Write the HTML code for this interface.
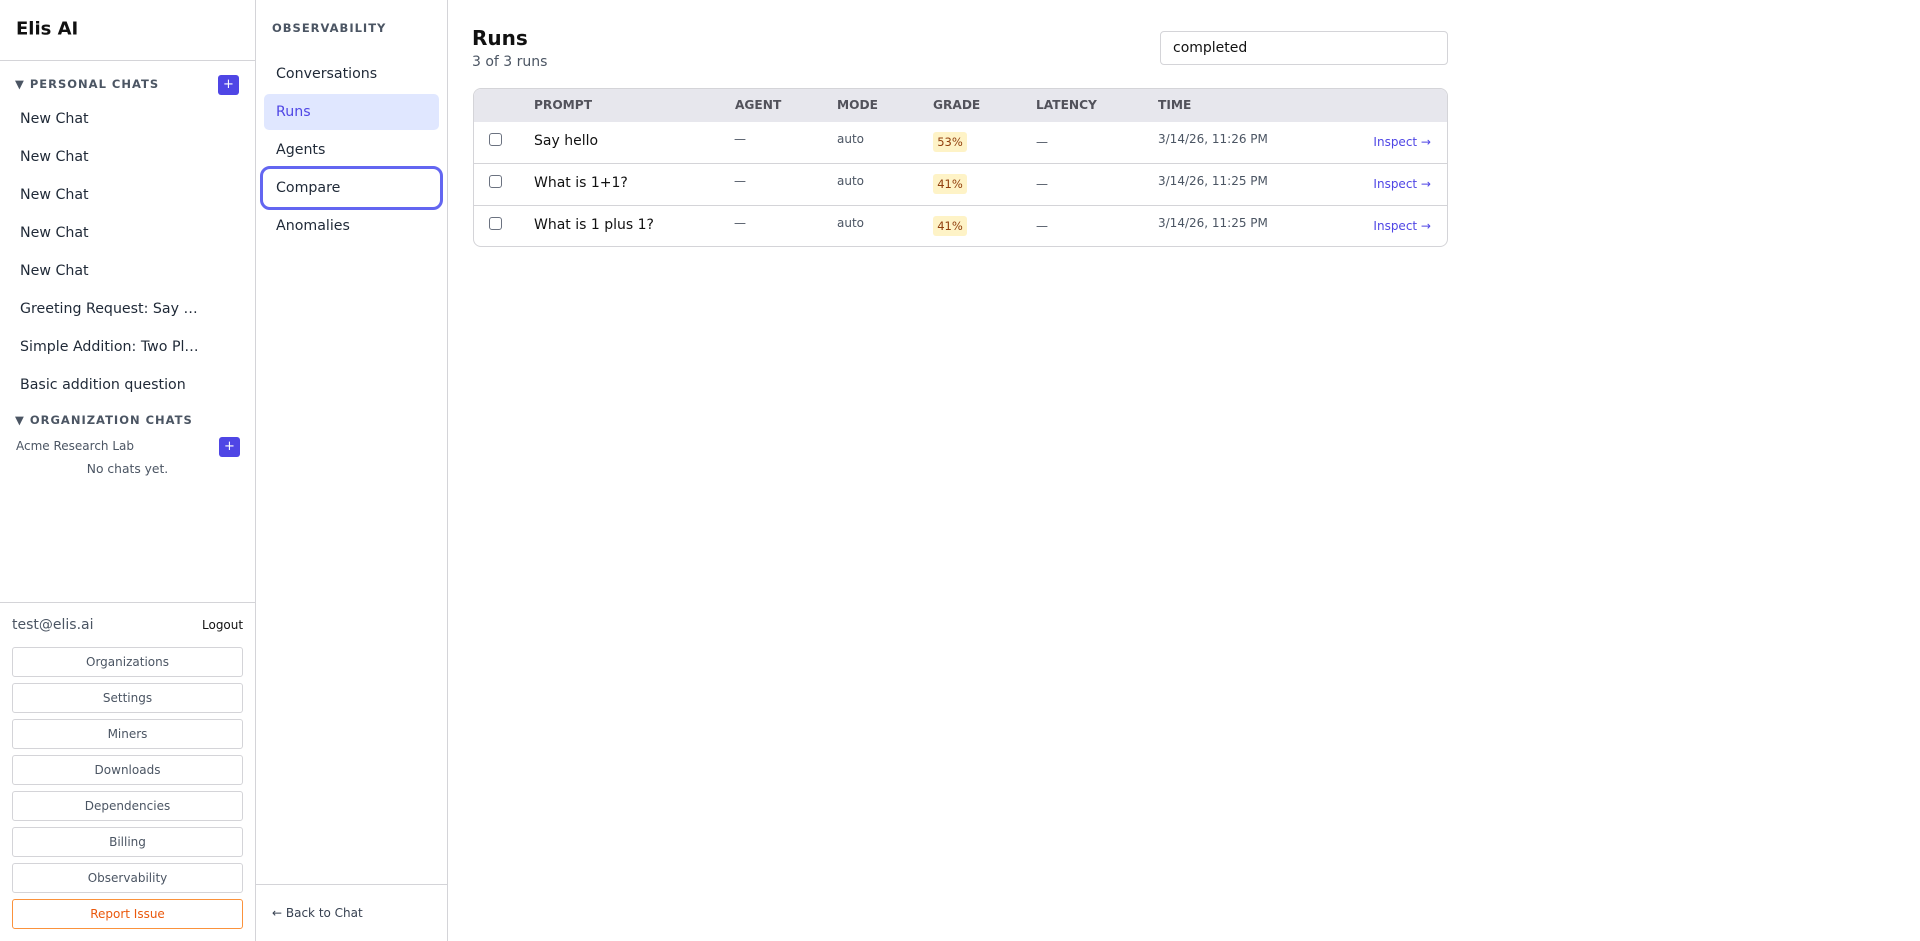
<!DOCTYPE html>
<html><head><meta charset="utf-8"><style>
*{box-sizing:border-box;margin:0;padding:0}
body{width:1920px;height:941px;position:relative;font-family:"DejaVu Sans","Liberation Sans",sans-serif;background:#fff;color:#111;overflow:hidden}
.a{position:absolute;white-space:nowrap}
.vc{transform:translateY(-50%)}
.sb{position:absolute;left:0;top:0;width:256px;height:941px;border-right:1.5px solid #d4d4d8}
.ob{position:absolute;left:256px;top:0;width:192px;height:941px;border-right:1.5px solid #d4d4d8}
.hdr{font-size:11.5px;font-weight:bold;letter-spacing:1px;color:#4b5563}
.plus{position:absolute;width:21px;height:20px;background:#4f46e5;border-radius:3px;color:#fff;font-size:13px;line-height:20px;text-align:center}
.item{font-size:14.2px;color:#1f2937}
.btn{position:absolute;left:12px;width:231px;height:30px;border:1px solid #d4d4d8;border-radius:3px;text-align:center;font-size:12px;line-height:28px;color:#4b5563}
.th{font-size:12.2px;font-weight:bold;color:#52525b}
.cb{position:absolute;width:13px;height:13px;border:1.3px solid #6b7280;border-radius:3px;background:#fff}
.sm{font-size:12px;color:#4b5563}
.badge{position:absolute;width:34px;height:20px;background:#fef3c7;border-radius:3px;color:#92400e;font-size:11.5px;line-height:20px;text-align:center}
.ins{font-size:12px;color:#4f46e5;right:489px}
</style></head><body>
<div class="sb">
 <div class="a vc" style="left:16px;top:29px;font-size:18px;font-weight:bold">Elis AI</div>
 <div class="a" style="left:0;top:60px;width:255px;border-top:1.5px solid #d4d4d8"></div>
 <div class="a vc hdr" style="left:15px;top:84px">▼ PERSONAL CHATS</div>
 <div class="plus" style="left:218px;top:75px">+</div>
 <div class="a vc item" style="left:20px;top:119px">New Chat</div>
 <div class="a vc item" style="left:20px;top:157px">New Chat</div>
 <div class="a vc item" style="left:20px;top:195px">New Chat</div>
 <div class="a vc item" style="left:20px;top:233px">New Chat</div>
 <div class="a vc item" style="left:20px;top:271px">New Chat</div>
 <div class="a vc item" style="left:20px;top:309px">Greeting Request: Say …</div>
 <div class="a vc item" style="left:20px;top:347px">Simple Addition: Two Pl…</div>
 <div class="a vc item" style="left:20px;top:385px">Basic addition question</div>
 <div class="a vc hdr" style="left:15px;top:420px">▼ ORGANIZATION CHATS</div>
 <div class="a vc" style="left:16px;top:446px;font-size:12px;color:#4b5563">Acme Research Lab</div>
 <div class="plus" style="left:219px;top:437px">+</div>
 <div class="a vc" style="left:0;width:255px;text-align:center;top:469px;font-size:12.3px;color:#4b5563">No chats yet.</div>
 <div class="a" style="left:0;top:602px;width:255px;border-top:1.5px solid #d4d4d8"></div>
 <div class="a vc" style="left:12px;top:625px;font-size:14px;color:#4b5563">test@elis.ai</div>
 <div class="a vc" style="left:202px;top:625px;font-size:12px;color:#111">Logout</div>
 <div class="btn" style="top:647px">Organizations</div>
 <div class="btn" style="top:683px">Settings</div>
 <div class="btn" style="top:719px">Miners</div>
 <div class="btn" style="top:755px">Downloads</div>
 <div class="btn" style="top:791px">Dependencies</div>
 <div class="btn" style="top:827px">Billing</div>
 <div class="btn" style="top:863px">Observability</div>
 <div class="btn" style="top:899px;border-color:#fb923c;color:#ea580c">Report Issue</div>
</div>
<div class="ob">
 <div class="a vc hdr" style="left:16px;top:28px">OBSERVABILITY</div>
 <div class="a vc item" style="left:20px;top:74px">Conversations</div>
 <div class="a" style="left:8px;top:94px;width:175px;height:36px;background:#e0e7ff;border-radius:5px"></div>
 <div class="a vc item" style="left:20px;top:112px;color:#4f46e5">Runs</div>
 <div class="a vc item" style="left:20px;top:150px">Agents</div>
 <div class="a" style="left:4px;top:166px;width:183px;height:44px;border:3px solid #6366f1;border-radius:10px"></div>
 <div class="a vc item" style="left:20px;top:188px">Compare</div>
 <div class="a vc item" style="left:20px;top:226px">Anomalies</div>
 <div class="a" style="left:0;top:884px;width:191px;border-top:1.5px solid #d4d4d8"></div>
 <div class="a vc" style="left:16px;top:913px;font-size:12px;color:#374151">← Back to Chat</div>
</div>
<div class="a vc" style="left:472px;top:38px;font-size:20px;font-weight:bold">Runs</div>
<div class="a vc" style="left:472px;top:62px;font-size:14px;color:#4b5563">3 of 3 runs</div>
<div class="a" style="left:1160px;top:31px;width:288px;height:34px;border:1px solid #d4d4d8;border-radius:4px;font-size:14px;line-height:32px;padding-left:12px;color:#111">completed</div>
<div class="a" style="left:473px;top:88px;width:975px;height:159px;border:1px solid #d4d4d8;border-radius:8px;overflow:hidden">
 <div class="a" style="left:0;top:0;width:975px;height:33px;background:#e7e7ed"></div>
 <div class="a" style="left:0;top:74px;width:975px;border-top:1px solid #d4d4d8"></div>
 <div class="a" style="left:0;top:116px;width:975px;border-top:1px solid #d4d4d8"></div>
</div>
<div class="a vc th" style="left:534px;top:105px">PROMPT</div>
<div class="a vc th" style="left:735px;top:105px">AGENT</div>
<div class="a vc th" style="left:837px;top:105px">MODE</div>
<div class="a vc th" style="left:933px;top:105px">GRADE</div>
<div class="a vc th" style="left:1036px;top:105px">LATENCY</div>
<div class="a vc th" style="left:1158px;top:105px">TIME</div>

<div class="cb" style="left:489px;top:133px"></div>
<div class="a vc" style="left:534px;top:141px;font-size:14px">Say hello</div>
<div class="a vc sm" style="left:734px;top:139px">—</div>
<div class="a vc sm" style="left:837px;top:139px">auto</div>
<div class="badge" style="left:933px;top:132px">53%</div>
<div class="a vc sm" style="left:1036px;top:142px">—</div>
<div class="a vc sm" style="left:1158px;top:139px">3/14/26, 11:26 PM</div>
<div class="a vc ins" style="top:142px">Inspect →</div>

<div class="cb" style="left:489px;top:175px"></div>
<div class="a vc" style="left:534px;top:183px;font-size:14px">What is 1+1?</div>
<div class="a vc sm" style="left:734px;top:181px">—</div>
<div class="a vc sm" style="left:837px;top:181px">auto</div>
<div class="badge" style="left:933px;top:174px">41%</div>
<div class="a vc sm" style="left:1036px;top:184px">—</div>
<div class="a vc sm" style="left:1158px;top:181px">3/14/26, 11:25 PM</div>
<div class="a vc ins" style="top:184px">Inspect →</div>

<div class="cb" style="left:489px;top:217px"></div>
<div class="a vc" style="left:534px;top:225px;font-size:14px">What is 1 plus 1?</div>
<div class="a vc sm" style="left:734px;top:223px">—</div>
<div class="a vc sm" style="left:837px;top:223px">auto</div>
<div class="badge" style="left:933px;top:216px">41%</div>
<div class="a vc sm" style="left:1036px;top:226px">—</div>
<div class="a vc sm" style="left:1158px;top:223px">3/14/26, 11:25 PM</div>
<div class="a vc ins" style="top:226px">Inspect →</div>
</body></html>
